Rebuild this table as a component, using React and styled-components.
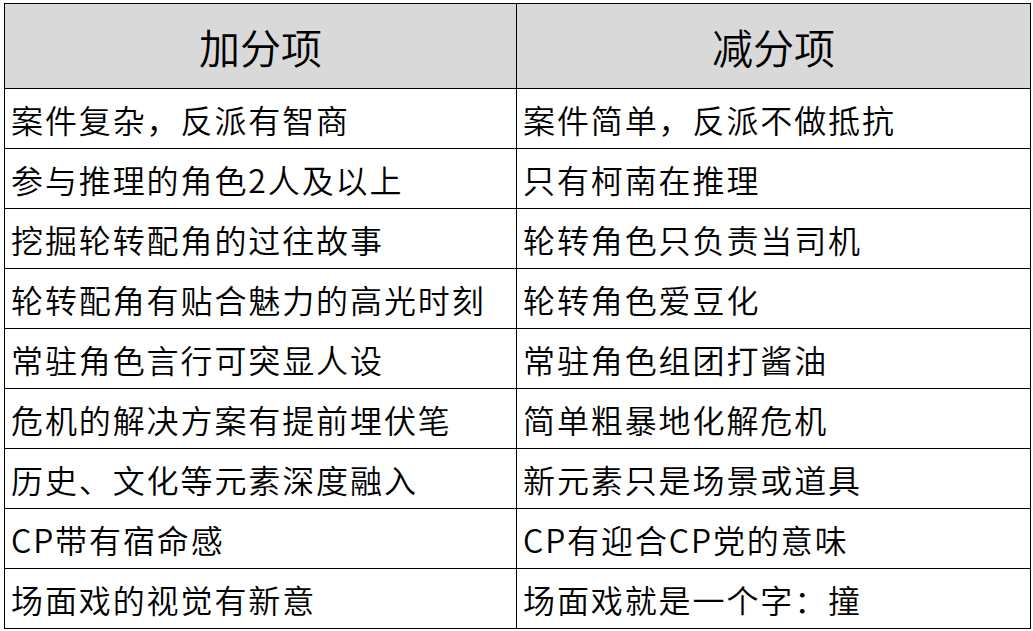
import React from 'react';
import styled, { createGlobalStyle } from 'styled-components';

const GlobalStyle = createGlobalStyle`
  html, body {
    margin: 0;
    padding: 0;
    background: #ffffff;
  }
  body {
    font-family: "Noto Sans CJK SC", "Noto Sans", sans-serif;
    color: #000;
  }
`;

const Page = styled.div`
  padding: 3px 0 0 4px;
`;

const Table = styled.table`
  border-collapse: collapse;
  table-layout: fixed;
  width: 1026px;
`;

const HeadCell = styled.th`
  height: 84px;
  padding: 0;
  background: #d9d9d9;
  border: 1px solid #000;
  font-size: 41px;
  font-weight: 350;
  text-align: center;
  vertical-align: middle;
  line-height: 1;
`;

const Cell = styled.td`
  height: 59px;
  padding: 0 0 0 6px;
  border: 1px solid #000;
  font-size: 32px;
  font-weight: 350;
  letter-spacing: 1.9px;
  line-height: 1;
  white-space: nowrap;
  vertical-align: middle;
`;

const rows = [
  ['案件复杂，反派有智商', '案件简单，反派不做抵抗'],
  ['参与推理的角色2人及以上', '只有柯南在推理'],
  ['挖掘轮转配角的过往故事', '轮转角色只负责当司机'],
  ['轮转配角有贴合魅力的高光时刻', '轮转角色爱豆化'],
  ['常驻角色言行可突显人设', '常驻角色组团打酱油'],
  ['危机的解决方案有提前埋伏笔', '简单粗暴地化解危机'],
  ['历史、文化等元素深度融入', '新元素只是场景或道具'],
  ['CP带有宿命感', 'CP有迎合CP党的意味'],
  ['场面戏的视觉有新意', '场面戏就是一个字：撞'],
];

export default function App() {
  return (
    <>
      <GlobalStyle />
      <Page>
        <Table>
          <colgroup>
            <col style={{ width: 512 }} />
            <col style={{ width: 514 }} />
          </colgroup>
          <thead>
            <tr>
              <HeadCell>加分项</HeadCell>
              <HeadCell>减分项</HeadCell>
            </tr>
          </thead>
          <tbody>
            {rows.map(([plus, minus]) => (
              <tr key={plus}>
                <Cell>{plus}</Cell>
                <Cell>{minus}</Cell>
              </tr>
            ))}
          </tbody>
        </Table>
      </Page>
    </>
  );
}
